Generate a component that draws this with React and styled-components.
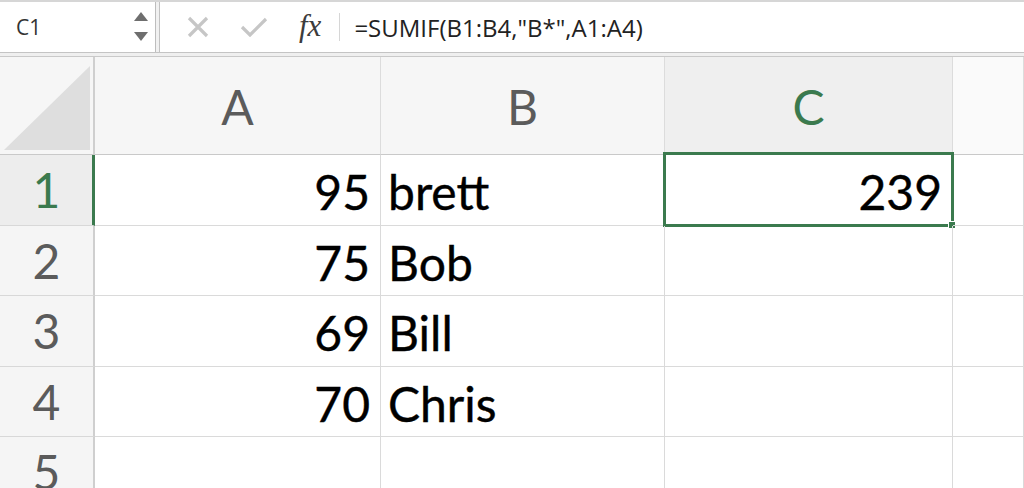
import styled, { createGlobalStyle } from "styled-components";

const GREEN = "#3b7a4e";

const GlobalStyle = createGlobalStyle`
  html, body {
    margin: 0;
    padding: 0;
    background: #ffffff;
    overflow: hidden;
  }
  body {
    font-family: Lato, "Open Sans", sans-serif;
  }
`;

const Page = styled.div`
  width: 1024px;
  height: 488px;
  overflow: hidden;
  background: #ffffff;
`;

const Toolbar = styled.div`
  display: flex;
  height: 50px;
  border-top: 2px solid #d6d6d6;
  border-bottom: 1px solid #c4c4c4;
  background: #ffffff;
`;

const ToolbarShadow = styled.div`
  height: 3px;
  background: #efefef;
  border-bottom: 1px solid #c9c9c9;
`;

const NameBox = styled.div`
  width: 156px;
  display: flex;
  align-items: center;
  justify-content: space-between;
  padding: 0 6px 0 16px;
  box-sizing: border-box;
  border-right: 1px solid #bdbdbd;
  font-family: "Open Sans", Lato, sans-serif;
  font-size: 21px;
  color: #333;
`;

const Divider = styled.div`
  width: 3px;
  background: #f1f1f1;
  border-right: 1px solid #c2c2c2;
`;

const FormulaArea = styled.div`
  flex: 1;
  display: flex;
  align-items: center;
  padding-left: 27px;
`;

const IconSlot = styled.div`
  width: ${(p) => p.w}px;
  display: flex;
  align-items: center;
  justify-content: center;
`;

const Fx = styled.span`
  font-family: "Liberation Serif", "DejaVu Serif", serif;
  font-style: italic;
  font-size: 31px;
  line-height: 1;
  color: #3c3c3c;
  margin-top: -4px;
`;

const Sep = styled.div`
  width: 1px;
  height: 28px;
  background: #d6d6d6;
  margin: 0 14px 0 18px;
`;

const Formula = styled.div`
  font-family: "Open Sans", Lato, sans-serif;
  font-size: 24px;
  color: #222;
  white-space: nowrap;
`;

const Grid = styled.div`
  display: grid;
  grid-template-columns: 95px 286px 284px 288px 1fr;
  grid-template-rows: 98px repeat(5, 70.5px);
`;

const Corner = styled.div`
  background: #f6f6f6;
  border-right: 2px solid #cfcfcf;
  border-bottom: 1px solid #c9c9c9;
  display: flex;
  align-items: flex-end;
  justify-content: flex-end;
  padding: 0 3px 4px 0;
  box-sizing: border-box;
`;

const ColHead = styled.div`
  background: ${(p) => (p.active ? "#efefef" : p.blank ? "#fafafa" : "#f6f6f6")};
  color: ${(p) => (p.active ? GREEN : "#5b5b5b")};
  border-right: 1px solid #dcdcdc;
  border-bottom: 1px solid #c9c9c9;
  display: flex;
  align-items: center;
  justify-content: center;
  font-size: 48px;
  padding-top: 2px;
  box-sizing: border-box;
`;

const RowHead = styled.div`
  background: ${(p) => (p.active ? "#ededed" : "#f5f5f5")};
  color: ${(p) => (p.active ? GREEN : "#5b5b5b")};
  border-right: 2px solid ${(p) => (p.active ? GREEN : "#cfcfcf")};
  border-bottom: 1px solid #d8d8d8;
  display: flex;
  align-items: center;
  justify-content: center;
  font-size: 48px;
  box-sizing: border-box;
  ${(p) => p.active && "box-shadow: inset -1px 0 0 " + GREEN + ";"}
`;

const Cell = styled.div`
  position: relative;
  border-right: 1px solid #dadada;
  border-bottom: 1px solid #dadada;
  display: flex;
  align-items: center;
  justify-content: ${(p) => (p.num ? "flex-end" : "flex-start")};
  padding: ${(p) => (p.num ? "4px 10px 0 0" : "4px 0 0 7px")};
  box-sizing: border-box;
  font-size: 48px;
  color: #000;
  white-space: nowrap;
  -webkit-text-stroke: 0.4px #000;
`;

const Selection = styled.div`
  position: absolute;
  left: -2px;
  top: -3px;
  right: -2px;
  bottom: -2px;
  border: 3px solid ${GREEN};
  pointer-events: none;
`;

const FillHandle = styled.div`
  position: absolute;
  right: -5px;
  bottom: -5px;
  width: 6px;
  height: 6px;
  background: ${GREEN};
  border: 1px solid #fff;
`;

const CornerTriangle = () => (
  <svg width="86" height="84" viewBox="0 0 86 84">
    <polygon points="86,0 86,84 0,84" fill="#dedede" />
  </svg>
);

const Spinner = () => (
  <svg width="16" height="32" viewBox="0 0 16 32">
    <polygon points="8,1 15,10 1,10" fill="#6e6e6e" />
    <polygon points="1,21 15,21 8,30" fill="#6e6e6e" />
  </svg>
);

const CancelIcon = () => (
  <svg width="22" height="22" viewBox="0 0 22 22">
    <path d="M2 2 L20 20 M20 2 L2 20" stroke="#c6c6c6" strokeWidth="3.2" fill="none" />
  </svg>
);

const CheckIcon = () => (
  <svg width="28" height="20" viewBox="0 0 28 20">
    <path d="M2 10 L10 18 L26 2" stroke="#c6c6c6" strokeWidth="3.2" fill="none" />
  </svg>
);

const rows = [
  { n: 1, a: "95", b: "brett", c: "239" },
  { n: 2, a: "75", b: "Bob" },
  { n: 3, a: "69", b: "Bill" },
  { n: 4, a: "70", b: "Chris" },
  { n: 5 },
];

export default function App() {
  return (
    <Page>
      <GlobalStyle />
      <Toolbar>
        <NameBox>
          <span>C1</span>
          <Spinner />
        </NameBox>
        <Divider />
        <FormulaArea>
          <IconSlot w={22}>
            <CancelIcon />
          </IconSlot>
          <IconSlot w={90}>
            <CheckIcon />
          </IconSlot>
          <Fx>fx</Fx>
          <Sep />
          <Formula>=SUMIF(B1:B4,"B*",A1:A4)</Formula>
        </FormulaArea>
      </Toolbar>
      <ToolbarShadow />
      <Grid>
        <Corner>
          <CornerTriangle />
        </Corner>
        <ColHead>A</ColHead>
        <ColHead>B</ColHead>
        <ColHead active>C</ColHead>
        <ColHead blank />
        {rows.map((r) => (
          <>
            <RowHead key={"h" + r.n} active={r.n === 1}>
              {r.n}
            </RowHead>
            <Cell num>{r.a}</Cell>
            <Cell>{r.b}</Cell>
            <Cell num>
              {r.c}
              {r.c && (
                <Selection>
                  <FillHandle />
                </Selection>
              )}
            </Cell>
            <Cell />
          </>
        ))}
      </Grid>
    </Page>
  );
}
